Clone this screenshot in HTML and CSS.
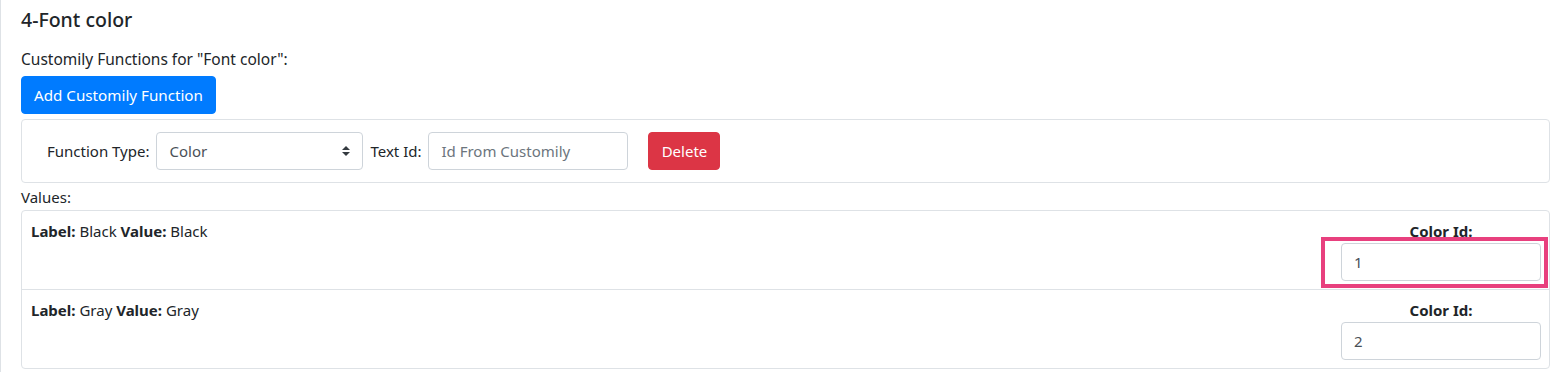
FILE: index.html
```html
<!DOCTYPE html>
<html lang="en">
<head>
<meta charset="utf-8">
<title>Font color</title>
<link rel="stylesheet" href="styles.css">
</head>
<body>
<div class="page">
  <h5 class="title">4-Font color</h5>
  <p class="intro">Customily Functions for "Font color":</p>
  <button class="btn btn-primary" type="button">Add Customily Function</button>
  <div class="panel">
    <label class="lbl">Function Type:</label>
    <div class="select">
      <span>Color</span>
      <svg class="caret" width="8" height="10" viewBox="0 0 8 10"><path d="M4 0L8 4H0Z M4 10L0 6H8Z" fill="#343a40"/></svg>
    </div>
    <label class="lbl">Text Id:</label>
    <input class="input text-id" type="text" placeholder="Id From Customily">
    <button class="btn btn-danger" type="button">Delete</button>
  </div>
  <div class="values-label">Values:</div>
  <div class="table">
    <div class="row">
      <div class="desc"><b>Label:</b> Black <b>Value:</b> Black</div>
      <div class="field">
        <div class="field-label">Color Id:</div>
        <div class="hl-wrap">
          <input class="input color-id" type="text" value="1">
          <span class="highlight"></span>
        </div>
      </div>
    </div>
    <div class="row">
      <div class="desc"><b>Label:</b> Gray <b>Value:</b> Gray</div>
      <div class="field">
        <div class="field-label">Color Id:</div>
        <div class="hl-wrap">
          <input class="input color-id" type="text" value="2">
        </div>
      </div>
    </div>
  </div>
</div>
</body>
</html>
```
FILE: styles.css
```css
* { box-sizing: border-box; }
html, body { margin: 0; padding: 0; background: #fff; }
body {
  font-family: "Noto Sans", "Open Sans", sans-serif;
  font-size: 15px;
  line-height: 24px;
  color: #212529;
}
.page {
  border-left: 1px solid #dee2e6;
  padding: 8px 15px 0 20px;
  height: 372px;
  overflow: hidden;
}
.title {
  margin: 0;
  font-size: 19.5px;
  font-weight: 500;
  line-height: 24px;
}
.intro {
  margin: 15px 0 5px;
  font-size: 15.5px;
}
.btn {
  font-family: inherit;
  font-size: 15px;
  line-height: 24px;
  border: 1px solid transparent;
  border-radius: 4px;
  padding: 6px 12px;
  color: #fff;
  cursor: pointer;
}
.btn-primary { background: #007bff; border-color: #007bff; font-size: 15.2px; }
.btn-danger { background: #dc3545; border-color: #dc3545; margin-left: 20px; width: 72px; padding: 6px 0; }
.panel {
  margin-top: 5px;
  border: 1px solid #dee2e6;
  border-radius: 4px;
  padding: 12px 12px 12px 25px;
  display: flex;
  align-items: center;
}
.lbl { color: #212529; margin-right: 7px; }
.select {
  width: 207px;
  height: 38px;
  border: 1px solid #ced4da;
  border-radius: 4px;
  padding: 0 12px;
  display: flex;
  align-items: center;
  justify-content: space-between;
  color: #495057;
  margin-right: 7px;
}
.input {
  height: 38px;
  width: 200px;
  border: 1px solid #ced4da;
  border-radius: 4px;
  padding: 6px 12px;
  font-family: inherit;
  font-size: 15px;
  color: #495057;
  background: #fff;
}
.input::placeholder { color: #6c757d; }
.values-label { margin-top: 2px; }
.table {
  margin-top: 1px;
  border: 1px solid #dee2e6;
  border-radius: 4px;
}
.row {
  display: flex;
  justify-content: space-between;
  padding: 8px 8px 8px 9px;
  border-bottom: 1px solid #dee2e6;
}
.row:last-child { border-bottom: 0; }
.desc { font-size: 15px; }
.field { width: 200px; display: flex; flex-direction: column; align-items: center; }
.field-label { font-weight: 700; font-size: 15px; }
.hl-wrap { position: relative; width: 200px; }
.color-id { display: block; }
.highlight {
  position: absolute;
  left: -20px;
  right: -7px;
  top: -6px;
  bottom: -7px;
  border: 4px solid #e8407e;
  pointer-events: none;
}
```
